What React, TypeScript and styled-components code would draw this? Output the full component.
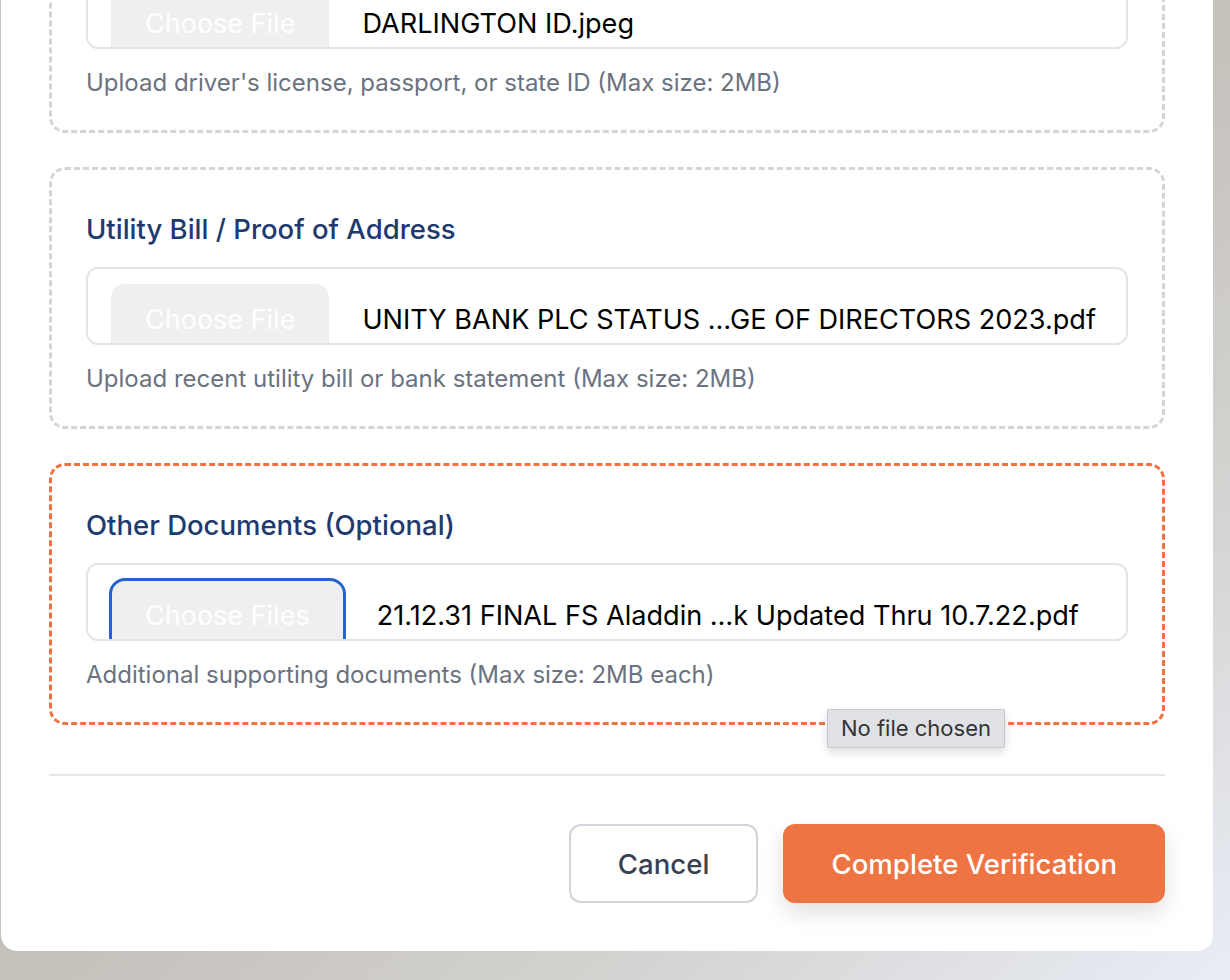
import React from "react";
import styled, { createGlobalStyle } from "styled-components";

const GlobalStyle = createGlobalStyle`
  html, body { margin: 0; padding: 0; }
  body {
    width: 1230px;
    height: 980px;
    overflow: hidden;
    font-family: Inter, "Noto Sans", "Liberation Sans", sans-serif;
    background: linear-gradient(to bottom right, #c4c0ba 50%, #d4d3d1 75%, #e9edf6 100%);
  }
  * { box-sizing: border-box; }
`;

const Page = styled.div`
  width: 1230px;
  height: 980px;
  padding-left: 1px;
  overflow: hidden;
`;

const Modal = styled.div`
  width: 1212px;
  margin-top: -177px;
  background: #ffffff;
  border-radius: 16px;
  padding: 48px;
  display: flex;
  flex-direction: column;
  gap: 34px;
`;

const Section = styled.section<{ $accent?: boolean }>`
  position: relative;
  border: 3px dashed ${(p) => (p.$accent ? "#f07243" : "#d3d5db")};
  border-radius: 16px;
  padding: 41px 34px 31px;
  display: flex;
  flex-direction: column;
`;

const Title = styled.h3`
  margin: 0 0 20px;
  font-size: 27.5px;
  line-height: 36px;
  font-weight: 500;
  color: #1e3a6e;
`;

const FileBox = styled.div`
  height: 78px;
  border: 2px solid #e4e4e6;
  border-radius: 12px;
  padding: 15px 23px;
  overflow: hidden;
  display: flex;
  align-items: flex-start;
  gap: 33px;
`;

const ChooseButton = styled.span<{ $focused?: boolean }>`
  flex: none;
  height: 72px;
  line-height: 72px;
  padding: 0 34px;
  border-radius: 14px;
  background: #efefef;
  color: #ffffff;
  font-size: 27px;
  white-space: nowrap;
  ${(p) => (p.$focused ? "outline: 3px solid #2563d0; outline-offset: -1px;" : "")}
`;

const FileName = styled.span`
  line-height: 72px;
  font-size: 27.1px;
  color: #000000;
  white-space: nowrap;
`;

const Helper = styled.p`
  margin: 18px 0 0;
  font-size: 24px;
  line-height: 32px;
  color: #6b7280;
`;

const Tooltip = styled.div`
  position: absolute;
  left: 775px;
  top: 243px;
  height: 39px;
  padding: 0 13px;
  line-height: 37px;
  font-size: 22px;
  color: #333338;
  background: #e0e1e5;
  border: 1px solid #c7c8cc;
  border-radius: 2px;
  box-shadow: 0 4px 10px rgba(0, 0, 0, 0.14);
  white-space: nowrap;
`;

const Footer = styled.div`
  margin-top: 15px;
  border-top: 2px solid #e5e7eb;
  padding-top: 48px;
  display: flex;
  justify-content: flex-end;
  gap: 25px;
`;

const Button = styled.button<{ $primary?: boolean }>`
  height: 79px;
  padding: 0 ${(p) => (p.$primary ? "48px" : "47px")};
  border-radius: 12px;
  font-family: inherit;
  font-size: 27.6px;
  font-weight: ${(p) => (p.$primary ? 500 : 450)};
  cursor: pointer;
  border: ${(p) => (p.$primary ? "none" : "2px solid #d1d5db")};
  background: ${(p) => (p.$primary ? "#ef7444" : "#ffffff")};
  color: ${(p) => (p.$primary ? "#ffffff" : "#374151")};
  box-shadow: ${(p) => (p.$primary ? "0 10px 22px rgba(0,0,0,0.12)" : "none")};
`;

type UploadProps = {
  title: string;
  button: string;
  file: string;
  helper: string;
  accent?: boolean;
  focused?: boolean;
  tooltip?: string;
};

function Upload({ title, button, file, helper, accent, focused, tooltip }: UploadProps) {
  return (
    <Section $accent={accent}>
      <Title>{title}</Title>
      <FileBox>
        <ChooseButton $focused={focused}>{button}</ChooseButton>
        <FileName>{file}</FileName>
      </FileBox>
      <Helper>{helper}</Helper>
      {tooltip && <Tooltip>{tooltip}</Tooltip>}
    </Section>
  );
}

export default function App() {
  return (
    <Page>
      <GlobalStyle />
      <Modal>
        <Upload
          title="Government-Issued ID"
          button="Choose File"
          file="DARLINGTON ID.jpeg"
          helper="Upload driver's license, passport, or state ID (Max size: 2MB)"
        />
        <Upload
          title="Utility Bill / Proof of Address"
          button="Choose File"
          file="UNITY BANK PLC STATUS …GE OF DIRECTORS 2023.pdf"
          helper="Upload recent utility bill or bank statement (Max size: 2MB)"
        />
        <Upload
          title="Other Documents (Optional)"
          button="Choose Files"
          file="21.12.31 FINAL FS Aladdin …k Updated Thru 10.7.22.pdf"
          helper="Additional supporting documents (Max size: 2MB each)"
          accent
          focused
          tooltip="No file chosen"
        />
        <Footer>
          <Button>Cancel</Button>
          <Button $primary>Complete Verification</Button>
        </Footer>
      </Modal>
    </Page>
  );
}
